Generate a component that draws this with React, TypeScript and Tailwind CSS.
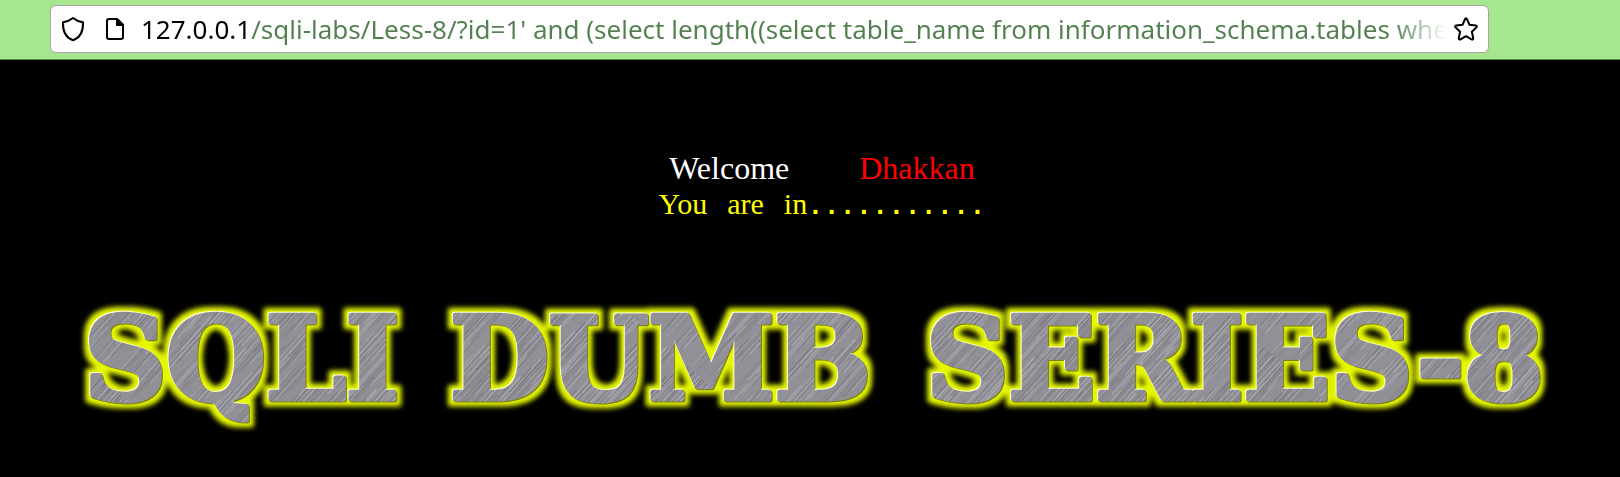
import { useState } from "react";

const url =
  "127.0.0.1/sqli-labs/Less-8/?id=1' and (select length((select table_name from information_schema.tables where table_schema=database() limit 0,1)))";

const shades = ["#c2c0c6", "#6b696f", "#b4b2b8", "#74727a", "#a9a7ad", "#7c7a82", "#858389"];

const scratches = Array.from({ length: 620 }, (_, i) => ({
  x: (i * 137) % 400,
  y: (i * 71) % 211,
  length: 20 + ((i * 31) % 90),
  shade: shades[(i * 5 + (i >> 3)) % shades.length],
}));

function ShieldIcon() {
  return (
    <svg viewBox="0 0 24 26" className="h-[26px] w-6" fill="none" stroke="black" strokeWidth="2" strokeLinejoin="round" aria-hidden="true">
      <path d="M12 2 C9 4.4 5.3 5.8 2 6.2 C1.6 14.5 4.7 21.5 12 24.3 C19.3 21.5 22.4 14.5 22 6.2 C18.7 5.8 15 4.4 12 2Z" />
    </svg>
  );
}

function PageIcon() {
  return (
    <svg viewBox="0 0 20 24" className="h-6 w-5" fill="none" stroke="black" strokeWidth="2" strokeLinejoin="round" aria-hidden="true">
      <path d="M4 2 H12 L18 8 V20 Q18 22 16 22 H4 Q2 22 2 20 V4 Q2 2 4 2Z" />
      <path d="M12 2 V8 H18Z" fill="black" />
    </svg>
  );
}

function StarIcon() {
  return (
    <svg viewBox="0 0 24 24" className="size-6" fill="none" stroke="black" strokeWidth="2" strokeLinejoin="round" aria-hidden="true">
      <path d="M11.1 2 Q12 .6 12.9 2 L15.5 7.8 L21.8 8.5 Q23.6 9 22.4 10.4 L17.9 14.8 L19.2 21.2 Q19.2 23 17.5 22.4 L12 19.2 L6.5 22.4 Q4.8 23 4.8 21.2 L6.1 14.8 L1.6 10.4 Q.4 9 2.2 8.5 L8.5 7.8Z" />
    </svg>
  );
}

function AddressBar() {
  const [value, setValue] = useState(url);
  return (
    <header className="border-b border-[#4f8a3c] bg-[#a5e68f] pt-[5px] pr-[131px] pb-1.5 pl-[50px]">
      <div className="flex h-12 items-center rounded-md border border-[#a8a3ab] bg-white px-[10px]">
        <button type="button" aria-label="Tracking protection" className="shrink-0">
          <ShieldIcon />
        </button>
        <button type="button" aria-label="Site information" className="ml-5 shrink-0">
          <PageIcon />
        </button>
        <input
          type="text"
          aria-label="Address"
          spellCheck={false}
          value={value}
          onChange={(e) => setValue(e.target.value)}
          className="ml-4 h-10 min-w-0 flex-1 bg-[linear-gradient(to_right,#000_109px,#53804f_109px,#53804f_calc(100%-54px),transparent)] bg-clip-text font-['Noto_Sans',sans-serif] text-[26px] text-transparent outline-none"
        />
        <button type="button" aria-label="Bookmark this page" className="ml-2 shrink-0">
          <StarIcon />
        </button>
      </div>
    </header>
  );
}

function Banner() {
  return (
    <h1 className="mt-[60px]">
      <svg viewBox="0 0 1620 160" className="block w-full" role="img" aria-label="SQLI DUMB SERIES-8">
        <defs>
          <pattern id="metal" width="400" height="211" patternUnits="userSpaceOnUse" patternTransform="rotate(-48)">
            <rect width="400" height="211" fill="#919096" />
            {scratches.map((s, i) => (
              <rect key={i} x={s.x} y={s.y} width={s.length} height="1" fill={s.shade} opacity="0.55" />
            ))}
          </pattern>
          <filter id="glow" x="0" y="0" width="1620" height="160" filterUnits="userSpaceOnUse" colorInterpolationFilters="sRGB">
            <feMorphology in="SourceAlpha" operator="dilate" radius="5" result="wide" />
            <feGaussianBlur in="wide" stdDeviation="2.5" result="soft" />
            <feFlood floodColor="#e6f800" />
            <feComposite in2="soft" operator="in" result="halo" />
            <feOffset in="SourceAlpha" dx="-1" dy="-1" result="shifted" />
            <feFlood floodColor="#ffffd8" />
            <feComposite in2="shifted" operator="in" result="light" />
            <feOffset in="SourceAlpha" dx="1" dy="1" result="lower" />
            <feFlood floodColor="#7c8017" />
            <feComposite in2="lower" operator="in" result="shade" />
            <feMerge>
              <feMergeNode in="halo" />
              <feMergeNode in="shade" />
              <feMergeNode in="light" />
              <feMergeNode in="SourceGraphic" />
            </feMerge>
          </filter>
        </defs>
        <text
          y="114"
          fill="url(#metal)"
          stroke="url(#metal)"
          strokeWidth="5"
          strokeLinejoin="round"
          filter="url(#glow)"
          className="font-['DejaVu_Serif',serif] text-[114px] font-bold"
        >
          <tspan x="84">SQLI</tspan>
          <tspan x="450">DUMB</tspan>
          <tspan x="926">SERIES-8</tspan>
        </text>
      </svg>
    </h1>
  );
}

export default function App() {
  return (
    <div className="min-h-screen overflow-hidden bg-black">
      <AddressBar />
      <main>
        <div className="mt-[90px] flex flex-col items-center pl-6 font-['Liberation_Serif',serif]">
          <p className="flex gap-[70px] text-[32px] leading-9">
            <span className="text-white">Welcome</span>
            <span className="text-[#f00]">Dhakkan</span>
          </p>
          <p className="flex items-baseline text-[30px] leading-9 text-[#ff0]">
            <span className="flex gap-5">
              <span>You</span>
              <span>are</span>
              <span>in</span>
            </span>
            <span className="font-['Liberation_Mono',monospace] text-[27px] font-bold">...........</span>
          </p>
        </div>
        <Banner />
      </main>
    </div>
  );
}
